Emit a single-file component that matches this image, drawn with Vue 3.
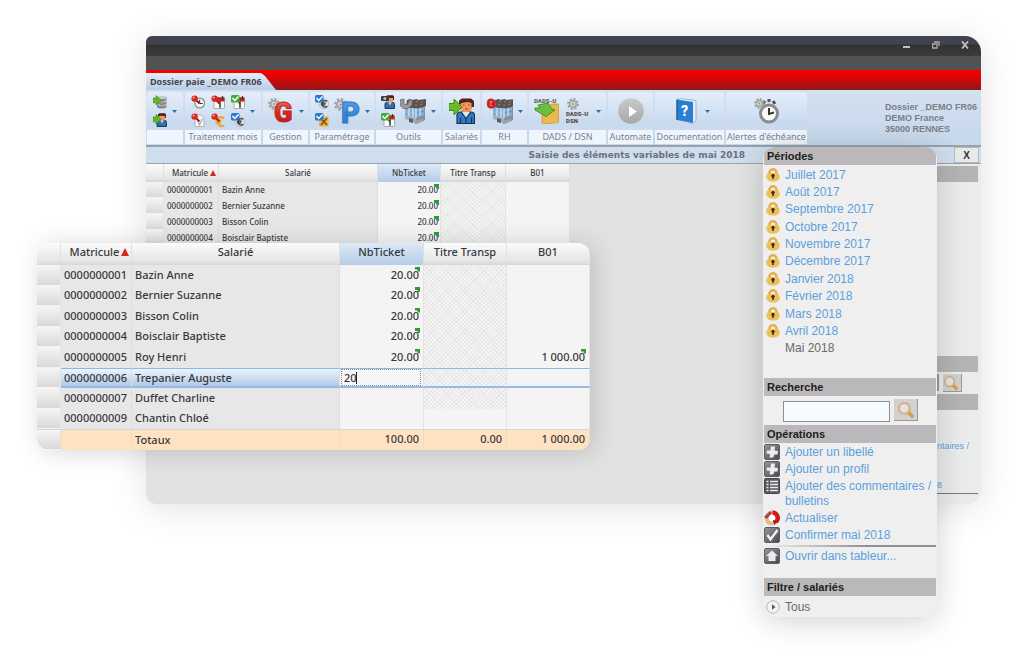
<script setup>
const salaries = [
  { id: '0000000001', name: 'Bazin Anne', nb: '20.00', b01: '' },
  { id: '0000000002', name: 'Bernier Suzanne', nb: '20.00', b01: '' },
  { id: '0000000003', name: 'Bisson Colin', nb: '20.00', b01: '' },
  { id: '0000000004', name: 'Boisclair Baptiste', nb: '20.00', b01: '' },
  { id: '0000000005', name: 'Roy Henri', nb: '20.00', b01: '1 000.00' },
  { id: '0000000006', name: 'Trepanier Auguste', nb: '', b01: '', edit: true },
  { id: '0000000007', name: 'Duffet Charline', nb: '', b01: '' },
  { id: '0000000009', name: 'Chantin Chloé', nb: '', b01: '', open: true },
]
const periodes = ['Juillet 2017', 'Août 2017', 'Septembre 2017', 'Octobre 2017', 'Novembre 2017', 'Décembre 2017', 'Janvier 2018', 'Février 2018', 'Mars 2018', 'Avril 2018']
const groups = [
  { key: 'g1', label: '', small: ['server', 'userin'], arrow: true },
  { key: 'g2', label: 'Traitement mois', small: ['pinclock', 'pincal', 'okcal', 'pindoc', 'pineuro', 'okeuro'], arrow: true },
  { key: 'g3', label: 'Gestion', small: [], big: ['bigG'], arrow: true },
  { key: 'g4', label: 'Paramétrage', small: ['okeuro', 'oktools'], big: ['bigP'], arrow: true },
  { key: 'g5', label: 'Outils', small: ['camuser', 'okcal'], big: ['building'], arrow: true },
  { key: 'g6', label: 'Salariés', small: [], big: ['biguser'] },
  { key: 'g7', label: 'RH', small: [], big: ['rh'], arrow: true },
  { key: 'g8', label: 'DADS / DSN', small: [], big: ['dads', 'dsn'], arrow: true },
  { key: 'g9', label: 'Automate', small: [], big: ['play'] },
  { key: 'g10', label: 'Documentation', small: [], big: ['book'], arrow: true },
  { key: 'g11', label: "Alertes d'échéance", small: [], big: ['alarm'] },
]
const letters = {
  bigG: [{ t: 'G', x: 6, y: 24, size: 27, fill: 'url(#gRed)', edge: '#c4211c' }],
  bigP: [{ t: 'P', x: 7, y: 25, size: 29, fill: 'url(#gBlue)', edge: '#2f78c4' }],
  rh: [{ t: 'G', x: 0, y: 10, size: 12, fill: '#cf201c', edge: '#cf201c' }],
  dads: [{ t: 'DADS-U', x: 0, y: 5, size: 6, fill: '#665c55', edge: 'none' }],
  dsn: [
    { t: 'DADS-U', x: 1, y: 18, size: 6, fill: '#5a4840', edge: 'none' },
    { t: 'DSN', x: 1, y: 25, size: 6, fill: '#5a4840', edge: 'none' },
  ],
  book: [{ t: '?', x: 7, y: 18, size: 14, fill: '#fff', edge: 'none' }],
}
const operations = [
  { icon: 'plus', text: 'Ajouter un libellé' },
  { icon: 'plus', text: 'Ajouter un profil' },
  { icon: 'list', text: 'Ajouter des commentaires / bulletins' },
  { icon: 'refresh', text: 'Actualiser' },
  { icon: 'check', text: 'Confirmer mai 2018' },
]
</script>

<template>
  <div class="page">
    <svg class="defs" width="0" height="0" aria-hidden="true">
      <defs>
        <linearGradient id="gRed" x1="0" y1="0" x2="0" y2="1"><stop offset="0" stop-color="#f07a5a" /><stop offset=".5" stop-color="#d92a22" /><stop offset="1" stop-color="#b80f12" /></linearGradient>
        <linearGradient id="gBlue" x1="0" y1="0" x2="0" y2="1"><stop offset="0" stop-color="#5aa5ea" /><stop offset="1" stop-color="#2671c4" /></linearGradient>
        <linearGradient id="gGrey" x1="0" y1="0" x2="0" y2="1"><stop offset="0" stop-color="#cbcbcb" /><stop offset="1" stop-color="#a6a6a6" /></linearGradient>
        <linearGradient id="gDark" x1="0" y1="0" x2="1" y2="1"><stop offset="0" stop-color="#98989c" /><stop offset="1" stop-color="#48484c" /></linearGradient>
      </defs>
      <symbol id="pin" viewBox="0 0 14 14"><path d="M5 5l3.500 3.500" stroke="#a01a14" stroke-width="1.800" /><circle cx="3.600" cy="3.600" r="3.200" fill="#d9281e" /><circle cx="2.600" cy="2.500" r="1.100" fill="#f7a49c" /></symbol>
      <symbol id="tickblue" viewBox="0 0 14 14"><rect x="0" y="0" width="8.500" height="7.500" rx="1.500" fill="#2b79cf" /><path d="M1.500 3l2.300 2.500L7.500 1.500" stroke="#fff" stroke-width="1.500" fill="none" /></symbol>
      <symbol id="cal" viewBox="0 0 14 14"><rect x="3" y="2.500" width="10.500" height="11" rx="1" fill="#fafafa" stroke="#8f8f8f" stroke-width=".7" /><path d="M3 2.500h10.500v4H3z" fill="#c9201c" /><path d="M5.500 1v3.500M11.500 1v3.500" stroke="#333" stroke-width="1.200" /><path d="M7.500 8l1.500-.8v5.500" stroke="#333" stroke-width="1.500" fill="none" /></symbol>
      <symbol id="person" viewBox="0 0 14 14"><path d="M4 13.500V9c0-1 1-2 2-2h5c1.500 0 2.500 1 2.500 2.500v4z" fill="#2270c0" stroke="#22303f" stroke-width=".9" /><path d="M7 7l2 3.500L11 7z" fill="#d9c9b4" /><rect x="6" y="1.500" width="6" height="6" rx="1.500" fill="#e99c62" /><path d="M5 3.500V1.300L6.500.3h5.500l1 1.200v3.500h-1V3L7 2.700z" fill="#4a1f1c" /></symbol>
      <symbol id="greenarrow" viewBox="0 0 14 14"><path d="M0 3h3V.5L8.300 5.300 3 10V7.800H0z" fill="#5fb726" stroke="#3b8b12" stroke-width=".6" /></symbol>
      <symbol id="server" viewBox="0 0 14 14"><path d="M4 2h9.500v10c-1 2-8.500 2-9.500 0z" fill="#7f8a97" /><ellipse cx="8.700" cy="2.400" rx="4.700" ry="1.700" fill="#c3ccd5" /><path d="M5 6c2 1.500 6 1.500 8.300 0M5 9.500c2 1.500 6 1.500 8.300 0" stroke="#dae3ec" fill="none" /><path d="M7 5h4v8H7z" fill="#a5845c" opacity=".5" /><use href="#greenarrow" /></symbol>
      <symbol id="userin" viewBox="0 0 14 14"><use href="#person" /><use href="#greenarrow" y="1" /></symbol>
      <symbol id="pinclock" viewBox="0 0 14 14"><circle cx="8.700" cy="8" r="4.900" fill="#f7f7f7" stroke="#8e8e8e" stroke-width="1.300" /><path d="M8.700 4.800V8.500h3" stroke="#333" fill="none" /><use href="#pin" /></symbol>
      <symbol id="pincal" viewBox="0 0 14 14"><use href="#cal" /><use href="#pin" /></symbol>
      <symbol id="okcal" viewBox="0 0 14 14"><use href="#cal" /><rect width="8.500" height="7.500" rx="1.500" fill="#46ab38" /><path d="M1.500 3l2.300 2.500L7.500 1.500" stroke="#fff" stroke-width="1.500" fill="none" /></symbol>
      <symbol id="pindoc" viewBox="0 0 14 14"><path d="M4 2h6l3 3v8.500H4z" fill="#f8f8f8" stroke="#aaa" stroke-width=".8" /><path d="M6.500 7l2 5 3-6.500" stroke="#aaa" stroke-width="1.200" fill="none" /><use href="#pin" /></symbol>
      <symbol id="pineuro" viewBox="0 0 14 14"><path d="M13 5.200C8.500 2.500 6.500 5.500 6.500 8.500s2.500 6 6.500 3.800M4.500 7.500h6M4.500 9.700h5.500" stroke="#eda42c" stroke-width="2" fill="none" /><use href="#pin" /></symbol>
      <symbol id="okeuro" viewBox="0 0 14 14"><circle cx="8.800" cy="8.700" r="4.900" fill="#e2e2e2" stroke="#ababab" stroke-width=".7" /><path d="M12.300 6.300c-3-1.800-5 .1-5 2.600s2 4.200 5 2.500M5.800 8.100h5M5.800 9.900h4.500" stroke="#333" stroke-width="1.300" fill="none" /><use href="#tickblue" /></symbol>
      <symbol id="oktools" viewBox="0 0 14 14"><rect x="4" y="3.500" width="9.500" height="10" rx="1" fill="#f0b233" /><path d="M6 12l6-7M6.500 6l5.500 6" stroke="#7c4a20" stroke-width="1.400" /><use href="#tickblue" /></symbol>
      <symbol id="camuser" viewBox="0 0 14 14"><use href="#person" /><rect x="0" y="1" width="8" height="5" rx="1" fill="#3c3c3c" /><circle cx="3.800" cy="3.500" r="1.500" fill="#bbb" /></symbol>
      <symbol id="gear" viewBox="0 0 12 12"><circle cx="6" cy="6" r="4.900" fill="none" stroke="#a2a2a2" stroke-width="2" stroke-dasharray="2.200 1.600" /><circle cx="6" cy="6" r="3.300" fill="#dcdcdc" stroke="#a8a8a8" stroke-width="2" /><circle cx="6" cy="6" r="1" fill="#8d8d8d" /></symbol>
      <symbol id="bigG" viewBox="0 0 26 26"><use href="#gear" x="0" y="0" width="12" height="12" /></symbol>
      <symbol id="bigP" viewBox="0 0 26 26"><use href="#gear" x="0" y="0" width="13" height="13" /></symbol>
      <symbol id="tower" viewBox="0 0 26 26"><path d="M3 8l11-1v17L3 21z" fill="#a8b0b8" /><path d="M14 6l9-1v17l-9 4z" fill="#8b9096" /><path d="M5 2l4-1 1 1 5-1 1 1 8-1v7l-9 3-11-2z" fill="#5e5250" /><path d="M9 3.500h2M14 3.500h2M19 4h2M8 6.500h2M13 7h2M18 6.500h2" stroke="#8d7f7b" stroke-width="1" /><path d="M3 11.500l11 1 8-1.500M3 16l11 1.500 8-2" stroke="#75b2e8" stroke-width="3" fill="none" /><path d="M7 10v8M11 10v9M18 10v8M14 10v10" stroke="#dde6ee" stroke-width="1.200" /><path d="M7 20l4 1v4l-4-1z" fill="#5a5f65" /><path d="M11 23l10-2 1 2-9 3z" fill="#9fa3a7" /></symbol>
      <symbol id="building" viewBox="0 0 26 26"><use href="#tower" x="2" /><path d="M0 2l4-1v5l3 1 2-3V1l3 2v4L8 10.500H3L0 7z" fill="#9a9a9a" stroke="#6b6b6b" stroke-width=".8" /></symbol>
      <symbol id="biguser" viewBox="0 0 26 26"><path d="M8 25.500V17c0-1 1-3 3-3h11c2 0 3.500 1.500 3.500 3.500v8z" fill="#2a7bcc" stroke="#23303f" stroke-width="1.200" /><path d="M13 14l4 6 4-6z" fill="#e9e2d8" /><path d="M12 14l5 6.500L22 14M17 20v5M11.500 19.500V25M22.500 19.500V25" stroke="#1d3550" stroke-width="1.200" fill="none" /><path d="M11 5c0-2 2-3 6-3s6 1 6 3v5c0 2-2 4-6 4s-6-2-6-4z" fill="#f09a5c" /><path d="M10 8V2.500L13 .5h9l3 2.500v6h-2.500V5l-4-1-6 1z" fill="#54221f" /><path d="M14 7h1.500M19 7h1.500M16 11h3" stroke="#b5301f" stroke-width="1.200" /><path d="M0 5.500h5V1l8 8-8 8v-4.500H0z" fill="#6cba2a" stroke="#3d8d15" stroke-width="1" /></symbol>
      <symbol id="rh" viewBox="0 0 26 26"><use href="#tower" x="3" /></symbol>
      <symbol id="dads" viewBox="0 0 26 26"><path d="M8 10h7l2-4h7.500v18c-5 1.500-12 2-16.500 1z" fill="#ebb850" stroke="#cf9a34" stroke-width=".8" /><path d="M1 10h5L4 7l10-2 4 6 3 1-9 6.500L1 12z" fill="#6cbf3c" stroke="#338518" stroke-width=".8" /></symbol>
      <symbol id="dsn" viewBox="0 0 26 26"><use href="#gear" x="2" y="0" width="12" height="12" /></symbol>
      <symbol id="play" viewBox="0 0 26 26"><circle cx="13" cy="13" r="12.800" fill="url(#gGrey)" /><path d="M11 8l8 5.500-8 5.500z" fill="#fff" /></symbol>
      <symbol id="book" viewBox="0 0 26 26"><path d="M4 1l3-.5 15 2v20l-4 3-4-2z" fill="#e3edf7" stroke="#7fa8cf" stroke-width=".7" /><path d="M3 1.500l16 2.500v21L3 22z" fill="#2b7fd2" /><path d="M3 1.500V22" stroke="#1a5ca4" stroke-width="1.500" /></symbol>
      <symbol id="alarm" viewBox="0 0 26 26"><path d="M9 6l2-3M21 6l-2-3M15 4V1" stroke="#555" stroke-width="3" /><circle cx="15" cy="15.500" r="8.500" fill="#fafafa" stroke="#8b8b8b" stroke-width="3" /><path d="M15 10v6l5-1.500" stroke="#333" stroke-width="2" fill="none" /><use href="#gear" x="0" y="0" width="11" height="11" /></symbol>
      <symbol id="lock" viewBox="0 0 14 14"><path d="M3.500 6.500V4.800a3.500 3.500 0 0 1 7 0V6.500" stroke="#e5b145" stroke-width="2.600" fill="none" /><path d="M3 5h8c2 0 2.700 2 2.700 4s-2 4.600-6.700 4.600S.3 11 .3 9 1 5 3 5z" fill="#edc057" /><path d="M7 6v5" stroke="#3b2a1d" stroke-width="1.500" /><circle cx="7" cy="7.600" r="1.700" fill="#3b2a1d" /></symbol>
      <symbol id="plus" viewBox="0 0 16 16"><rect x=".5" y=".5" width="15" height="15" rx="1.500" fill="url(#gDark)" stroke="#5d5d61" /><path d="M7 2.500h4l-.5 4 3.500.5-.5 3.500h-3L9 13.500H5.500L6 10l-3.500-.5L3 6.500h3.500z" fill="#ececf0" /></symbol>
      <symbol id="list" viewBox="0 0 16 16"><rect x=".5" y=".5" width="15" height="15" rx="1" fill="#5a5a5e" stroke="#47474b" /><path d="M2.500 3.500h2M6 3.500h8M2.500 6.500h2M6 6.500h8M2.500 9.500h2M6 9.500h8M2.500 12.500h2M6 12.500h8" stroke="#ececf0" stroke-width="1.500" /></symbol>
      <symbol id="refresh" viewBox="0 0 16 16"><circle cx="8" cy="8" r="5.500" fill="#fff" stroke="#d2c9c3" stroke-width="4" /><path d="M8.500 2.500a5.500 5.500 0 0 1 3.500 9.500" stroke="#d81812" stroke-width="4.400" fill="none" /><path d="M2.600 8.500A5.500 5.500 0 0 0 8 13.500" stroke="#e6bd87" stroke-width="4" fill="none" /><path d="M0 7l6-6 2 2-5 6z" fill="#a8473a" /><path d="M9 10l5 1-4 4z" fill="#b01212" /></symbol>
      <symbol id="check" viewBox="0 0 16 16"><rect x=".5" y=".5" width="15" height="15" rx="1.500" fill="url(#gDark)" stroke="#5d5d61" /><path d="M3.500 8l3 4.500L13.500 3" stroke="#f2f2f4" stroke-width="2.400" fill="none" /></symbol>
      <symbol id="home" viewBox="0 0 16 16"><rect x=".5" y=".5" width="15" height="15" rx="1.500" fill="url(#gDark)" stroke="#5d5d61" /><path d="M8 2.500l6 5.500h-2.500v5h-7V8H2z" fill="#ececf0" /></symbol>
      <symbol id="next" viewBox="0 0 14 14"><circle cx="7" cy="7" r="6.300" fill="#f3f3f3" stroke="#aaa" stroke-width=".8" /><path d="M6 4.200L9.500 7 6 9.800z" fill="#555" /></symbol>
      <symbol id="glass" viewBox="0 0 16 16"><path d="M10 10l3.500 3.500" stroke="#dc9a4d" stroke-width="3.200" stroke-linecap="round" /><circle cx="6.500" cy="6.500" r="4.800" fill="#dde3ea" stroke="#dfae76" stroke-width="1.800" /></symbol>
    </svg>

    <main class="window">
      <header class="caption">
        <div class="controls">
          <button aria-label="Réduire"><svg width="8" height="8"><path d="M0 6h7" stroke="#c2c2c4" stroke-width="2" /></svg></button>
          <button aria-label="Restaurer"><svg width="8" height="8"><path d="M2 1h5v4M0 3h5v4H.500V3" stroke="#aaaaae" stroke-width="1.300" fill="none" /></svg></button>
          <button aria-label="Fermer la fenêtre"><svg width="8" height="8"><path d="M1 .500l6 7M7 .500l-6 7" stroke="#c2c2c4" stroke-width="1.800" /></svg></button>
        </div>
      </header>
      <div class="substrip"></div>
      <nav class="tabs"><button class="tab">Dossier paie _DEMO FR06</button></nav>
      <section class="ribbon">
        <div v-for="g in groups" :key="g.key" class="group" :class="g.key">
          <div class="tools">
            <div v-if="g.small.length" class="smalls">
              <svg v-for="(s, i) in g.small" :key="i" width="14" height="14"><use :href="'#' + s" /></svg>
            </div>
            <svg v-for="b in g.big || []" :key="b" class="bigicon" width="26" height="26">
              <use :href="'#' + b" />
              <text v-for="l in letters[b] || []" :key="l.t" class="letter" :x="l.x" :y="l.y" :font-size="l.size" :fill="l.fill" :stroke="l.edge">{{ l.t }}</text>
            </svg>
            <svg v-if="g.arrow" class="drop" width="5" height="3"><path d="M0 0h5L2.500 3z" fill="#2a6bab" /></svg>
          </div>
          <div class="label">{{ g.label }}</div>
        </div>
        <address class="company">Dossier _DEMO FR06<br />DEMO France<br />35000 RENNES</address>
      </section>
      <div class="heading">
        <h1>Saisie des éléments variables de mai 2018</h1>
        <button class="close">X</button>
      </div>
      <section class="body">
        <div class="sheet">
          <table class="grid small">
            <colgroup><col class="c0" /><col class="c1" /><col class="c2" /><col class="c3" /><col class="c4" /><col class="c5" /></colgroup>
            <thead>
              <tr><th class="handle"></th><th class="sorted">Matricule<svg class="sort" width="6" height="6"><path d="M3 0l3 6H0z" fill="#d8281c" /></svg></th><th>Salarié</th><th class="active">NbTicket</th><th>Titre Transp</th><th>B01</th></tr>
            </thead>
            <tbody>
              <tr v-for="s in salaries.slice(0, 4)" :key="s.id">
                <td class="handle"></td><td class="fixed">{{ s.id }}</td><td class="fixed">{{ s.name }}</td>
                <td class="num"><span class="flag">{{ s.nb }}</span></td><td class="hatch"></td><td></td>
              </tr>
            </tbody>
          </table>
        </div>
        <aside class="rail">
          <div class="bar"></div>
          <div class="railgap"></div>
          <div class="bar"></div>
          <div class="railsearch"><span class="edge"></span><button aria-label="Lancer la recherche"><svg width="16" height="16"><use href="#glass" /></svg></button></div>
          <div class="bar"></div>
          <a href="#" class="r1">ntaires /</a>
          <a href="#" class="r2">8</a>
          <hr />
        </aside>
      </section>
    </main>

    <section class="zoomtable">
      <table class="grid large">
        <colgroup><col class="c0" /><col class="c1" /><col class="c2" /><col class="c3" /><col class="c4" /><col class="c5" /></colgroup>
        <thead>
          <tr><th class="handle"></th><th class="sorted">Matricule<svg class="sort" width="8" height="8"><path d="M4 0l4 8H0z" fill="#d8281c" /></svg></th><th>Salarié</th><th class="active">NbTicket</th><th>Titre Transp</th><th>B01</th></tr>
        </thead>
        <tbody>
          <tr v-for="s in salaries" :key="s.id" :class="{ editing: s.edit }">
            <td class="handle"></td><td class="fixed">{{ s.id }}</td><td class="fixed">{{ s.name }}</td>
            <td v-if="s.edit" class="field"><input type="text" value="20" aria-label="NbTicket de Trepanier Auguste" /><span class="caret"></span></td>
            <td v-else class="num"><span v-if="s.nb" class="flag">{{ s.nb }}</span></td>
            <td :class="{ hatch: !s.open }"></td>
            <td class="num"><span v-if="s.b01" class="flag">{{ s.b01 }}</span></td>
          </tr>
        </tbody>
        <tfoot>
          <tr><td class="handle"></td><td></td><td>Totaux</td><td class="num">100.00</td><td class="num">0.00</td><td class="num">1 000.00</td></tr>
        </tfoot>
      </table>
    </section>

    <aside class="panel">
      <h2>Périodes</h2>
      <ul class="periods">
        <li v-for="p in periodes" :key="p"><svg width="14" height="14"><use href="#lock" /></svg><a href="#">{{ p }}</a></li>
        <li class="current">Mai 2018</li>
      </ul>
      <h2><label for="search">Recherche</label></h2>
      <form class="search" @submit.prevent>
        <input id="search" type="text" />
        <button aria-label="Rechercher"><svg width="18" height="18"><use href="#glass" /></svg></button>
      </form>
      <h2>Opérations</h2>
      <ul class="ops">
        <li v-for="o in operations" :key="o.text"><svg width="16" height="16"><use :href="'#' + o.icon" /></svg><a href="#">{{ o.text }}</a></li>
        <li class="rule"></li>
        <li><svg width="16" height="16"><use href="#home" /></svg><a href="#">Ouvrir dans tableur...</a></li>
      </ul>
      <h2>Filtre / salariés</h2>
      <div class="filter"><svg width="14" height="14"><use href="#next" /></svg>Tous</div>
    </aside>
  </div>
</template>

<style>
body {
  margin: 0;
  background: #fff;
}
</style>

<style scoped>
* {
  box-sizing: border-box;
}
.page {
  position: relative;
  min-height: 100vh;
  padding: 36px 43px 0 146px;
  font-family: "Liberation Sans", Arial, sans-serif;
}
.defs {
  position: absolute;
}
button,
input {
  font: inherit;
  padding: 0;
  border: 0;
}
a {
  color: #5c9fdc;
  text-decoration: none;
}
ul {
  list-style: none;
  margin: 0;
  padding: 0;
}
.window {
  border-radius: 6px 16px 14px 10px;
  overflow: hidden;
  background: #e2e2e2;
  box-shadow: 0 4px 36px rgba(0, 0, 0, 0.12);
}
.caption {
  height: 20px;
  background: linear-gradient(#41444f 0, #41444f 8px, #333335 9px, #3b3b3b 100%);
}
.controls {
  display: flex;
  justify-content: flex-end;
  gap: 21px;
  padding: 5px 12px 0 0;
}
.controls button {
  display: flex;
  width: 8px;
  height: 8px;
  background: none;
}
.substrip {
  height: 14px;
  background: #525252;
}
.tabs {
  display: flex;
  height: 20px;
  padding-top: 3px;
  background: linear-gradient(#f60000, #e00505 35%, #8c1818);
}
.tab {
  width: 130px;
  padding-left: 4px;
  text-align: left;
  font: bold 9px/16px "Noto Sans", sans-serif;
  color: #45464b;
  background: linear-gradient(#e3edf9, #b9cde5);
  clip-path: polygon(0 0, 115px 0, 119px 3px, 130px 100%, 0 100%);
  white-space: nowrap;
}
.ribbon {
  display: flex;
  gap: 2px;
  height: 55px;
  padding: 2px 4px 1px 1px;
  background: linear-gradient(#d3e0f0, #c6d8ec);
}
.group {
  flex: none;
  display: flex;
  flex-direction: column;
  border-radius: 2px;
  background: linear-gradient(#e4eefa, #c9daee 60%, #d3e0f0);
}
.tools {
  flex: 1;
  display: flex;
  align-items: center;
  justify-content: center;
  gap: 5px;
}
.label {
  height: 14px;
  background: #eef5fd;
  color: #7d828a;
  font: 9px/14px "Noto Sans", sans-serif;
  text-align: center;
  white-space: nowrap;
}
.smalls {
  display: grid;
  gap: 4px 6px;
}
.smalls svg,
.tools > svg {
  display: block;
}
.bigicon {
  overflow: visible;
}
.letter {
  font-family: Roboto, sans-serif;
  font-weight: 900;
}
.g1 { width: 36px; }
.g2 { width: 76px; }
.g2 .smalls { grid-template-columns: repeat(3, 14px); }
.g3 { width: 45px; }
.g4 { width: 64px; }
.g5 { width: 65px; }
.g6 { width: 37px; }
.g7 { width: 45px; }
.g8 { width: 77px; }
.g9 { width: 45px; }
.g10 { width: 69px; }
.g10 .tools { padding-left: 5px; }
.g11 { width: 81px; }
.company {
  margin: 10px 0 0 auto;
  font: bold 9px/11px "Liberation Sans", Arial, sans-serif;
  color: #7a7e85;
  white-space: nowrap;
}
.heading {
  display: flex;
  align-items: center;
  height: 19px;
  padding-right: 2px;
  background: #cfdeee;
  border-top: 2px solid #98a1ac;
  border-bottom: 1px solid #98a1ac;
}
.heading h1 {
  flex: 1;
  margin: 0 209px 0 0;
  text-align: right;
  font: bold 9px/16px "DejaVu Sans", Verdana, sans-serif;
  color: #6c7178;
}
.close {
  width: 25px;
  height: 16px;
  border: 1px solid #b9b9b9;
  background: #e9e9e9;
  font-weight: bold;
  font-size: 10px;
  color: #333;
}
.body {
  display: flex;
  height: 340px;
}
.sheet {
  flex: 1;
}
.grid {
  table-layout: fixed;
  border-collapse: separate;
  border-spacing: 0;
  font-family: "Noto Sans", sans-serif;
  font-weight: 500;
  color: #38383b;
}
.grid th,
.grid td {
  padding: 0;
  white-space: nowrap;
}
.grid th {
  font-weight: 500;
  background: linear-gradient(#fbfbfb, #e6e6e6 80%, #d6d6d6);
  border-right: 1px solid #e0e0e0;
}
.grid th.active {
  background: linear-gradient(#dce9f7, #b5cce6);
}
.grid td {
  background: #f4f4f4;
  border-right: 1px solid #e3e3e3;
}
.grid td.fixed {
  background: #e7e7e7;
  border-color: #dedede;
}
.grid td.handle {
  background: linear-gradient(#f5f5f5, #d9d9d9);
  border-bottom: 1px solid #f3f3f3;
}
.grid td.hatch {
  background:
    repeating-linear-gradient(45deg, transparent 0 2px, rgba(0, 0, 0, 0.04) 2px 3px),
    repeating-linear-gradient(-45deg, transparent 0 2px, rgba(0, 0, 0, 0.04) 2px 3px),
    #f4f4f4;
}
.num {
  text-align: right;
}
.sort {
  margin-left: 2px;
}
.flag {
  position: relative;
}
.flag::after {
  content: "";
  position: absolute;
  top: 0;
  right: -1px;
  width: 5px;
  height: 5px;
  background: #2f9a37;
  clip-path: polygon(0 0, 100% 0, 100% 100%, 50% 100%, 50% 60%, 0 60%);
}
.small {
  width: 424px;
  font-size: 8px;
  line-height: 12px;
}
.small .c0 { width: 18px; }
.small .c1 { width: 55px; }
.small .c2 { width: 159px; }
.small .c3 { width: 63px; }
.small .c4 { width: 65px; }
.small th { height: 18px; }
.grid.small th.sorted { padding-left: 6px; }
.small td { height: 16px; }
.small td.fixed { padding-left: 3px; }
.small td.num { padding-right: 2px; }
.zoomtable {
  position: absolute;
  top: 243px;
  left: 37px;
  border-radius: 12px;
  overflow: hidden;
  box-shadow: 4px 2px 26px rgba(0, 0, 0, 0.16);
}
.large {
  width: 553px;
  font-size: 11px;
  line-height: 16px;
}
.large .c0 { width: 24px; }
.large .c1 { width: 71px; }
.large .c2 { width: 208px; }
.large .c3 { width: 84px; }
.large .c4 { width: 83px; }
.grid.large th {
  height: 22px;
  padding-bottom: 4px;
}
.grid.large th.sorted { padding-left: 7px; }
.large td { height: 21px; }
.large tr:nth-child(even) td { height: 20px; }
.grid.large td.num,
.grid.large td.fixed {
  padding-bottom: 2px;
}
.large td.fixed { padding-left: 3px; }
.large td.num { padding-right: 4px; }
.large tfoot td {
  background: #ffe2c1;
  border-color: #efdcc6;
  border-top: 1px solid #d6d6d6;
}
.large tfoot td:nth-child(3) { padding-left: 3px; }
.grid.large tfoot td { padding-bottom: 0; }
.large .editing td:not(.handle) {
  border-top: 1px solid #8db7e6;
  border-bottom: 2px solid #94bbe6;
}
.large .editing td.fixed {
  padding-bottom: 0;
  background: linear-gradient(#edf5fd, #b0c9e5);
}
.large .field {
  position: relative;
  padding: 0 2px 0 1px;
}
.field input {
  display: block;
  width: 100%;
  height: 17px;
  padding-left: 2px;
  border: 1px dotted #8b8b8b;
  background: #f6f6f6;
  color: #38383b;
}
.caret {
  position: absolute;
  top: 3px;
  left: 16px;
  width: 1px;
  height: 12px;
  background: #222;
}
.rail {
  width: 44px;
  display: flex;
  flex-direction: column;
  padding: 2px 3px 0 0;
  background: #eaebeb;
}
.bar {
  height: 16px;
  background: #b4b4b5;
}
.railgap {
  height: 174px;
}
.railsearch {
  display: flex;
  gap: 4px;
  height: 22px;
  padding-top: 2px;
}
.edge {
  width: 2px;
  height: 17px;
  border: 1px solid #999;
}
.railsearch button {
  width: 19px;
  height: 18px;
  background: #d0d0d0;
  border-right: 1px solid #999;
  border-bottom: 1px solid #999;
}
.railsearch button svg {
  display: block;
}
.r1,
.r2 {
  font-size: 9px;
  line-height: 12px;
  white-space: nowrap;
}
.r1 { margin-top: 30px; }
.r2 { margin-top: 27px; }
.rail hr {
  width: 100%;
  margin: 2px 0 0;
  border: 0;
  border-top: 1px solid #77777d;
}
.panel {
  position: absolute;
  top: 147px;
  right: 87px;
  width: 174px;
  padding: 0 1px;
  border-radius: 12px;
  overflow: hidden;
  background: #efefef;
  font-size: 12px;
  color: #6a6a6a;
  box-shadow: 0 4px 30px rgba(0, 0, 0, 0.18);
}
.panel h2 {
  margin: 0;
  height: 18px;
  padding-left: 3px;
  background: #bab8ba;
  color: #1e1e20;
  font-size: 11px;
  line-height: 19px;
}
.periods {
  display: grid;
  grid-auto-rows: 1fr;
  height: 192px;
  padding-top: 1px;
  margin-bottom: 21px;
}
.periods li,
.filter {
  display: flex;
  align-items: center;
  gap: 5px;
  padding-left: 2px;
}
.periods .current {
  padding-left: 21px;
}
.search {
  display: flex;
  align-items: flex-start;
  gap: 4px;
  padding: 3px 18px 3px 19px;
}
.search input {
  flex: 1;
  min-width: 0;
  height: 21px;
  margin-top: 2px;
  border: 1px solid #8f8f8f;
  background: #f6fbff;
}
.search button {
  display: grid;
  place-items: center;
  width: 24px;
  height: 22px;
  background: #d2d0d0;
  border-right: 1px solid #999;
  border-bottom: 1px solid #999;
}
.ops {
  padding-top: 1px;
  margin-bottom: 13px;
}
.ops li {
  display: flex;
  gap: 5px;
  min-height: 17px;
  line-height: 15px;
  padding: 1px 0 1px 0;
}
.ops svg {
  flex: none;
  margin: -1px 0;
}
.ops .rule {
  min-height: 0;
  height: 2px;
  margin: 1px 0;
  padding: 0;
  background: linear-gradient(90deg, #efefef, #8d9096 60%);
}
.filter {
  height: 21px;
}
</style>
